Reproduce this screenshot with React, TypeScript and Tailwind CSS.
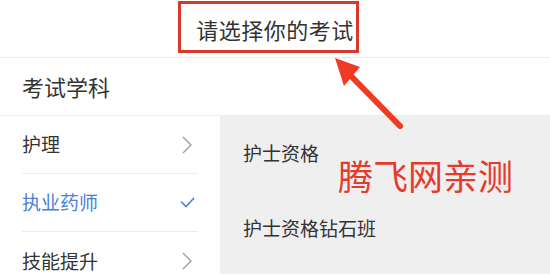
const subjects = [
  { name: "护理", active: false },
  { name: "执业药师", active: true },
  { name: "技能提升", active: false },
];

const exams = ["护士资格", "护士资格钻石班"];

const App = () => {
  return (
    <div
      className="relative h-[275px] w-[550px] overflow-hidden bg-white text-[#333]"
      style={{ fontFamily: '"Noto Sans CJK SC", "Noto Sans", sans-serif' }}
    >
      <header className="flex h-[58px] items-center justify-center border-b border-[#ececec]">
        <span className="relative text-[22px] leading-none tracking-[0.5px] text-[#333]">
          请选择你的考试
          <span className="absolute -top-[17px] -bottom-[13px] -left-[18px] -right-[5px] border-[3px] border-[#d9392b]" />
        </span>
      </header>

      <div className="flex h-[58px] items-center border-b border-[#ececec] pl-[22px] text-[22px] text-[#333]">
        考试学科
      </div>

      <div className="flex">
        <ul className="w-[220px] pl-[22px]">
          {subjects.map((s, i) => (
            <li
              key={s.name}
              className={`flex h-[58px] w-[176px] items-center justify-between text-[19px] ${
                i < subjects.length - 1 ? "border-b border-[#ececec]" : ""
              } ${s.active ? "text-[#4a7fd6]" : "text-[#333]"}`}
            >
              <span>{s.name}</span>
              {s.active ? (
                <svg className="mr-[3px]" width="15" height="11" viewBox="0 0 15 11" fill="none">
                  <polyline points="1,4.5 6,9.5 14,1" stroke="#4a7fd6" strokeWidth="1.6" />
                </svg>
              ) : (
                <svg className="mr-[6px]" width="10" height="18" viewBox="0 0 10 18" fill="none">
                  <polyline points="1,1 9,9 1,17" stroke="#9a9a9a" strokeWidth="1.3" />
                </svg>
              )}
            </li>
          ))}
        </ul>

        <div className="relative h-[158px] flex-1 bg-[#efefef]">
          {exams.map((e) => (
            <div key={e} className="flex h-[75px] items-center pl-[23px] text-[19px] text-[#333]">
              {e}
            </div>
          ))}
          <span className="absolute left-[118px] top-[41px] text-[35px] leading-none text-[#e63b2a]">
            腾飞网亲测
          </span>
        </div>
      </div>

      <svg className="absolute left-0 top-0" width="550" height="275" viewBox="0 0 550 275">
        <line x1="400" y1="126" x2="350" y2="75" stroke="#ef3b24" strokeWidth="6" strokeLinecap="round" />
        <polygon points="335,58 360,67 344,86" fill="#ef3b24" />
      </svg>
    </div>
  );
};

export default App;
